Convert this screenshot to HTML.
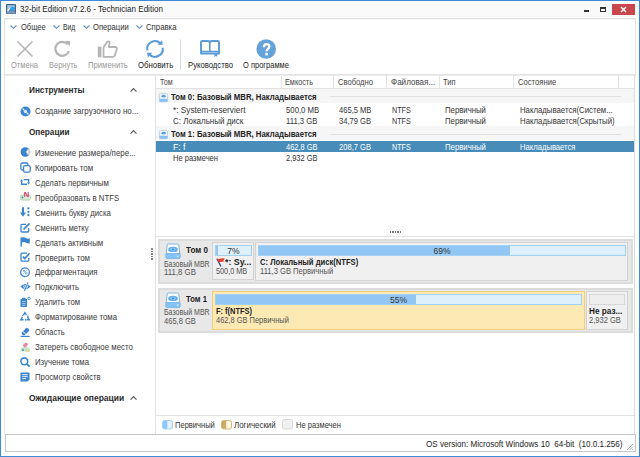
<!DOCTYPE html><html><head><meta charset="utf-8"><style>
*{margin:0;padding:0;box-sizing:border-box}
html,body{width:640px;height:457px;overflow:hidden;background:#fff}
body{position:relative;font-family:"Liberation Sans",sans-serif;font-size:8px;color:#333}
.t{position:absolute;white-space:nowrap;line-height:10px;transform-origin:0 0}
svg{position:absolute;overflow:visible}
</style></head><body>
<div style="position:absolute;left:0px;top:0px;width:640px;height:457px;border:1px solid #3d8bd9"></div>
<div style="position:absolute;left:1px;top:1px;width:638px;height:17px;background:#fafafa"></div>
<svg style="left:6px;top:4px" width="10" height="10" viewBox="0 0 10 10"><rect x="0" y="0" width="10" height="10" rx="0.8" fill="#39648c"/><rect x="1.2" y="1.2" width="7.6" height="6.4" fill="#a9c6de"/><path d="M1.2 7.6 Q2.5 3.5 6 3.2 L8.8 3.2 L8.8 7.6 Z" fill="#5d8db8"/><path d="M1.6 7.4 Q2.6 4.2 5 3.8" stroke="#fff" stroke-width="1.2" fill="none"/><circle cx="6.2" cy="4.4" r="1.9" fill="#1fa6ee"/><rect x="0.6" y="8.2" width="8.8" height="1.4" fill="#8aa5bd"/></svg>
<div class="t" style="left:19.50px;top:4px;font-size:9px;color:#1a1a1a;transform:scaleX(0.8933);">32-bit Edition v7.2.6 - Technician Edition</div>
<div style="position:absolute;left:584px;top:10px;width:5px;height:2px;background:#333"></div>
<div style="position:absolute;left:600px;top:7px;width:6px;height:5px;border:1px solid #333;border-top-width:2px"></div>
<div style="position:absolute;left:612px;top:4px;width:23px;height:11px;background:#c9474c"></div>
<svg style="left:620px;top:6px" width="7" height="7" viewBox="0 0 7 7"><path d="M1 1L6 6M6 1L1 6" stroke="#fff" stroke-width="1.4"/></svg>
<div style="position:absolute;left:4px;top:18px;width:632px;height:57px;border:1px solid #e2e2e2;border-bottom:none"></div>
<div style="position:absolute;left:5px;top:19px;width:630px;height:1px;background:#f3f3f3"></div>
<svg style="left:10px;top:25px" width="7" height="4" viewBox="0 0 7 4"><path d="M0.5 0.5L3.5 3.3L6.5 0.5" stroke="#5e8cba" stroke-width="1.1" fill="none"/></svg>
<div class="t" style="left:21.10px;top:22px;font-size:9px;color:#333;transform:scaleX(0.8383);">Общее</div>
<svg style="left:52.5px;top:25px" width="7" height="4" viewBox="0 0 7 4"><path d="M0.5 0.5L3.5 3.3L6.5 0.5" stroke="#5e8cba" stroke-width="1.1" fill="none"/></svg>
<div class="t" style="left:63.00px;top:22px;font-size:9px;color:#333;transform:scaleX(0.7487);">Вид</div>
<svg style="left:82.5px;top:25px" width="7" height="4" viewBox="0 0 7 4"><path d="M0.5 0.5L3.5 3.3L6.5 0.5" stroke="#5e8cba" stroke-width="1.1" fill="none"/></svg>
<div class="t" style="left:93.00px;top:22px;font-size:9px;color:#333;transform:scaleX(0.8497);">Операции</div>
<svg style="left:135.75px;top:25px" width="7" height="4" viewBox="0 0 7 4"><path d="M0.5 0.5L3.5 3.3L6.5 0.5" stroke="#5e8cba" stroke-width="1.1" fill="none"/></svg>
<div class="t" style="left:145.75px;top:22px;font-size:9px;color:#333;transform:scaleX(0.8640);">Справка</div>
<svg style="left:17px;top:41px" width="16" height="16" viewBox="0 0 16 16"><path d="M0.5 0.5L15.5 15.5M15.5 0.5L0.5 15.5" stroke="#b4b4b4" stroke-width="1.5"/></svg>
<div class="t" style="left:11.25px;top:60px;font-size:9px;color:#999;transform:scaleX(0.8363);">Отмена</div>
<svg style="left:54px;top:40px" width="17" height="17" viewBox="0 0 17 17"><path d="M13.6 4.2 A7 7 0 1 0 15 11" stroke="#b4b4b4" stroke-width="2.2" fill="none"/><path d="M11.2 0.8 L16.2 1.2 L15.6 6.4 Z" fill="#b4b4b4"/></svg>
<div class="t" style="left:48.75px;top:60px;font-size:9px;color:#999;transform:scaleX(0.8308);">Вернуть</div>
<svg style="left:97px;top:40px" width="21" height="18" viewBox="0 0 21 18"><rect x="0.8" y="6.7" width="3.6" height="10.6" fill="#b4b4b4"/><path d="M6.5 7.5 L10.2 1.8 Q12.2 0.6 12.6 2.6 L11.8 7 L18.4 7 Q20.2 7.3 19.8 9.2 L17.8 15.6 Q17.4 16.8 16 16.8 L6.5 16.8 Z" fill="#fff" stroke="#b4b4b4" stroke-width="1.8" stroke-linejoin="round"/></svg>
<div class="t" style="left:87.50px;top:60px;font-size:9px;color:#999;transform:scaleX(0.8544);">Применить</div>
<svg style="left:145px;top:40px" width="20" height="18" viewBox="0 0 20 18"><path d="M2.3 10.35 A7.8 7.8 0 0 1 15.97 3.99" stroke="#5a9ad8" stroke-width="2.1" fill="none"/><path d="M17.1 0.3 L17.7 4.8 L12.5 4.8 Z" fill="#5a9ad8"/><path d="M17.68 7.65 A7.8 7.8 0 0 1 4.03 14.01" stroke="#5a9ad8" stroke-width="2.1" fill="none"/><path d="M2 12.8 L7.2 12.8 L3 17.6 Z" fill="#5a9ad8"/></svg>
<div class="t" style="left:137.50px;top:60px;font-size:9px;color:#222;transform:scaleX(0.8646);">Обновить</div>
<div style="position:absolute;left:180px;top:39px;width:1px;height:31px;background:#dedede"></div>
<svg style="left:200px;top:40px" width="21" height="18" viewBox="0 0 21 18"><path d="M1 13.6 L1 2.4 Q1 1 2.4 1 L7.6 1 Q9.6 1 9.8 2.6 Q10 1 12 1 L17.6 1 Q19 1 19 2.4 L19 13.6 Z" stroke="#5a9ad8" stroke-width="1.9" fill="none" stroke-linejoin="round"/><path d="M1.5 11.6 L18.5 11.6 M9.8 2.2 L9.8 11.6" stroke="#5a9ad8" stroke-width="1.6"/><path d="M14.4 13 L17.2 13 L17.2 17 L15.8 15.7 L14.4 17 Z" fill="#5a9ad8"/></svg>
<div class="t" style="left:187.50px;top:60px;font-size:9px;color:#222;transform:scaleX(0.8557);">Руководство</div>
<svg style="left:256px;top:39px" width="20" height="20" viewBox="0 0 20 20"><circle cx="10.2" cy="10" r="9.8" fill="#65a2da"/><path d="M7.9 8.2 Q7.9 5.1 10.6 5.1 Q13.3 5.1 13.3 7.6 Q13.3 9.2 11.8 10 Q10.6 10.6 10.6 12.3" stroke="#fff" stroke-width="2.3" fill="none"/><rect x="9.3" y="13.8" width="2.6" height="2.6" fill="#fff"/></svg>
<div class="t" style="left:243.30px;top:60px;font-size:9px;color:#222;transform:scaleX(0.8337);">О программе</div>
<div style="position:absolute;left:4px;top:74px;width:632px;height:1px;background:#e3e3e3"></div>
<div style="position:absolute;left:4px;top:75px;width:632px;height:1px;background:#ececec"></div>
<div style="position:absolute;left:4px;top:75px;width:1px;height:359px;background:#e6e6e6"></div>
<div class="t" style="left:28.75px;top:85px;font-size:9px;color:#2a2a2a;transform:scaleX(0.9126);font-weight:bold;">Инструменты</div>
<svg style="left:130px;top:88px" width="7" height="4" viewBox="0 0 7 4"><path d="M0.5 3.6L3.5 0.6L6.5 3.6" stroke="#555" stroke-width="1.1" fill="none"/></svg>
<svg style="left:20px;top:106px" width="11" height="11" viewBox="0 0 11 11"><circle cx="5.5" cy="5.5" r="5" fill="#3a86d2"/><circle cx="5.5" cy="5.5" r="1.7" fill="#dbe9f7"/><path d="M2.6 2.6 L4.2 4.2 M8.4 8.4 L6.8 6.8" stroke="#fff" stroke-width="1.3"/></svg>
<div class="t" style="left:35.00px;top:106px;font-size:9px;color:#3a3a3a;transform:scaleX(0.8881);">Создание загрузочного но...</div>
<div class="t" style="left:28.75px;top:127px;font-size:9px;color:#2a2a2a;transform:scaleX(0.9089);font-weight:bold;">Операции</div>
<svg style="left:130px;top:129.5px" width="7" height="4" viewBox="0 0 7 4"><path d="M0.5 3.6L3.5 0.6L6.5 3.6" stroke="#555" stroke-width="1.1" fill="none"/></svg>
<div class="t" style="left:35.00px;top:148px;font-size:9px;color:#3a3a3a;transform:scaleX(0.8806);">Изменение размера/пере...</div>
<svg style="left:20px;top:147px" width="10" height="10" viewBox="0 0 10 10"><circle cx="5.4" cy="5" r="4.8" fill="#3a84cf"/><path d="M5.6 5 L8.2 0.9 A4.8 4.8 0 0 1 8.2 9.1 Z" fill="#c9d0d8"/><path d="M5.6 5 L8.2 0.9 A4.8 4.8 0 0 0 5.6 5 A4.8 4.8 0 0 0 8.2 9.1 Z" fill="#3a84cf"/><path d="M7 5 L9.6 3 M7 5 L9.6 7" stroke="#fff" stroke-width="0.8"/></svg>
<div class="t" style="left:35.00px;top:163px;font-size:9px;color:#3a3a3a;transform:scaleX(0.8790);">Копировать том</div>
<svg style="left:20px;top:162px" width="10" height="10" viewBox="0 0 10 10"><rect x="0.9" y="1" width="7" height="7" rx="1.5" fill="none" stroke="#3a84cf" stroke-width="1.3"/><rect x="3.6" y="3.6" width="6.6" height="6.6" rx="1.5" fill="#fff" stroke="#3a84cf" stroke-width="1.3"/></svg>
<div class="t" style="left:35.00px;top:178px;font-size:9px;color:#3a3a3a;transform:scaleX(0.8707);">Сделать первичным</div>
<svg style="left:20px;top:178px" width="10" height="10" viewBox="0 0 10 10"><path d="M1.6 3.2 V6.2 H7" stroke="#3a84cf" stroke-width="1.4" fill="none"/><path d="M0 3.4 L3.2 3.4 L1.6 1.2 Z" fill="#3a84cf"/><path d="M8.6 4.6 V1.6 H3.6" stroke="#3a84cf" stroke-width="1.4" fill="none"/><path d="M7 4.4 L10.2 4.4 L8.6 6.6 Z" fill="#3a84cf"/></svg>
<div class="t" style="left:35.00px;top:193px;font-size:9px;color:#3a3a3a;transform:scaleX(0.8666);">Преобразовать в NTFS</div>
<svg style="left:20px;top:190px" width="10" height="10" viewBox="0 0 10 10"><rect x="0.5" y="5" width="10" height="5" rx="1.5" fill="#d8ecd0" stroke="#b8d4b0"/><text x="6.5" y="7" text-anchor="middle" font-family="Liberation Sans" font-weight="bold" font-size="7.5" fill="#d0306a">N</text><circle cx="2.5" cy="7.5" r="0.9" fill="#3a84cf"/></svg>
<div class="t" style="left:35.00px;top:208px;font-size:9px;color:#3a3a3a;transform:scaleX(0.8624);">Сменить букву диска</div>
<svg style="left:20px;top:207px" width="10" height="10" viewBox="0 0 10 10"><path d="M3 0.2 L3 7.5" stroke="#3a84cf" stroke-width="2"/><path d="M0 5.6 L3 9.8 L6 5.6 Z" fill="#3a84cf"/><circle cx="8.4" cy="1.4" r="1.1" fill="#3a84cf"/><circle cx="8.4" cy="4.8" r="1.1" fill="#3a84cf"/><circle cx="8.4" cy="8.2" r="1.1" fill="#3a84cf"/></svg>
<div class="t" style="left:35.00px;top:223px;font-size:9px;color:#3a3a3a;transform:scaleX(0.8564);">Сменить метку</div>
<svg style="left:20px;top:223px" width="10" height="10" viewBox="0 0 10 10"><path d="M6 1.3 L2 1.3 Q1 1.3 1 2.3 L1 8.2 Q1 9 2 9 L7.8 9 Q8.7 9 8.7 8 L8.7 5" stroke="#3a84cf" stroke-width="1.3" fill="none"/><path d="M3.6 6.4 L9.6 0.4" stroke="#3a84cf" stroke-width="1.7"/></svg>
<div class="t" style="left:35.00px;top:238px;font-size:9px;color:#3a3a3a;transform:scaleX(0.8691);">Сделать активным</div>
<svg style="left:20px;top:237px" width="10" height="10" viewBox="0 0 10 10"><path d="M1.2 0.5 L1.2 9.6" stroke="#3a84cf" stroke-width="1.5"/><path d="M1.5 0.6 Q4.5 -0.2 6 1.1 Q7.8 2.2 9.8 1.3 L9.8 6.2 Q7.8 7 6 5.7 Q4.5 4.5 1.5 5.6 Z" fill="#3a84cf"/></svg>
<div class="t" style="left:35.00px;top:253px;font-size:9px;color:#3a3a3a;transform:scaleX(0.8763);">Проверить том</div>
<svg style="left:20px;top:252px" width="10" height="10" viewBox="0 0 10 10"><path d="M7 1.2 L2 1.2 Q1 1.2 1 2.2 L1 8.2 Q1 9.1 2 9.1 L7.9 9.1 Q8.8 9.1 8.8 8 L8.8 6" stroke="#3a84cf" stroke-width="1.3" fill="none"/><path d="M2.8 4.6 L4.8 6.6 L9.6 1.2" stroke="#3a84cf" stroke-width="1.7" fill="none"/></svg>
<div class="t" style="left:35.00px;top:267px;font-size:9px;color:#3a3a3a;transform:scaleX(0.8688);">Дефрагментация</div>
<svg style="left:20px;top:267px" width="10" height="10" viewBox="0 0 10 10"><circle cx="5" cy="5.2" r="4.4" fill="none" stroke="#3a84cf" stroke-width="1.3"/><circle cx="4" cy="4.2" r="1.1" fill="#8ab8e4"/><circle cx="6.3" cy="6.3" r="1.2" fill="#8ab8e4"/><path d="M3.4 6.8 L6.8 3.4" stroke="#8ab8e4" stroke-width="0.9"/></svg>
<div class="t" style="left:35.00px;top:282px;font-size:9px;color:#3a3a3a;transform:scaleX(0.8651);">Подключить</div>
<svg style="left:20px;top:282px" width="10" height="10" viewBox="0 0 10 10"><path d="M0.3 4.6 Q5.5 -0.6 10.7 4.6 Q5.5 9.8 0.3 4.6 Z" fill="#3a84cf"/><ellipse cx="5.5" cy="4.6" rx="2.6" ry="1.3" fill="#c4dcf2"/><circle cx="5.4" cy="4.6" r="1" fill="#3a84cf"/><path d="M8 0.4 L4.4 8.8" stroke="#fff" stroke-width="2"/><path d="M8 0.4 L4.4 8.8" stroke="#3a84cf" stroke-width="1.1"/></svg>
<div class="t" style="left:35.00px;top:297px;font-size:9px;color:#3a3a3a;transform:scaleX(0.8653);">Удалить том</div>
<svg style="left:20px;top:297px" width="10" height="10" viewBox="0 0 10 10"><rect x="0.5" y="2" width="6.5" height="8" fill="#3a84cf"/><rect x="2" y="0.8" width="3.5" height="1.5" fill="#3a84cf"/><path d="M2 4.5 H5.5 M2 6.5 H5.5 M2 8.3 H5.5" stroke="#cfe2f5" stroke-width="0.7"/><circle cx="9" cy="1.4" r="1.2" fill="none" stroke="#3a84cf" stroke-width="0.9"/></svg>
<div class="t" style="left:35.00px;top:312px;font-size:9px;color:#3a3a3a;transform:scaleX(0.8696);">Форматирование тома</div>
<svg style="left:20px;top:312px" width="10" height="10" viewBox="0 0 10 10"><path d="M3.4 3.2 L5 0.6 L6.4 3" stroke="#3a84cf" stroke-width="1.4" fill="none"/><path d="M7.4 4.6 L9.2 7.8 L6.6 7.8" stroke="#3a84cf" stroke-width="1.4" fill="none"/><path d="M3.6 7.8 L0.8 7.8 L2.4 5" stroke="#3a84cf" stroke-width="1.4" fill="none"/><path d="M6.2 6.4 L4.6 7.8 L6.2 9.2 Z M1.4 4.4 L3.4 4 L3.2 2.2 Z M8.6 3.8 L6.6 3.2 L8 5.6 Z" fill="#3a84cf"/></svg>
<div class="t" style="left:35.00px;top:327px;font-size:9px;color:#3a3a3a;transform:scaleX(0.8392);">Область</div>
<svg style="left:20px;top:327px" width="10" height="10" viewBox="0 0 10 10"><path d="M1.4 6 L6 1.2 Q6.8 0.5 7.6 1.2 L9 2.6 Q9.6 3.3 9 4 L4.6 8.2 L2.8 8.2 Z" fill="#3a84cf"/><path d="M3 4.6 L5.6 7" stroke="#fff" stroke-width="0.9"/><path d="M0.6 9.4 L9.6 9.4" stroke="#3a84cf" stroke-width="1.2"/></svg>
<div class="t" style="left:35.00px;top:342px;font-size:9px;color:#3a3a3a;transform:scaleX(0.8750);">Затереть свободное место</div>
<svg style="left:20px;top:342px" width="10" height="10" viewBox="0 0 10 10"><path d="M0.5 7 L5 3 L10 7 L10 9.5 L0.5 9.5 Z" fill="#cfe3c2"/><path d="M2.5 3.5 L5 1 Q6 0.3 7 1 L8.2 2.2 L5.2 5.5 Z" fill="#e58a9e"/><circle cx="3" cy="8" r="0.9" fill="#3a84cf"/><path d="M6 9 L9.5 9" stroke="#e0c060" stroke-width="0.8"/></svg>
<div class="t" style="left:35.00px;top:357px;font-size:9px;color:#3a3a3a;transform:scaleX(0.8653);">Изучение тома</div>
<svg style="left:20px;top:357px" width="10" height="10" viewBox="0 0 10 10"><circle cx="4.3" cy="4.3" r="3.4" fill="none" stroke="#3a84cf" stroke-width="1.6"/><path d="M6.8 6.8 L9.6 9.6" stroke="#3a84cf" stroke-width="1.9"/></svg>
<div class="t" style="left:35.00px;top:372px;font-size:9px;color:#3a3a3a;transform:scaleX(0.8621);">Просмотр свойств</div>
<svg style="left:20px;top:372px" width="10" height="10" viewBox="0 0 10 10"><path d="M0.5 0.5 L9.5 0.5 L9.5 7.5 L7.5 9.6 L0.5 9.6 Z" fill="#3a84cf"/><path d="M2.2 2.7 H7.8 M2.2 4.7 H7.8 M2.2 6.7 H6" stroke="#fff" stroke-width="0.9"/></svg>
<div class="t" style="left:28.60px;top:393px;font-size:9px;color:#2a2a2a;transform:scaleX(0.9427);font-weight:bold;">Ожидающие операции</div>
<svg style="left:130px;top:395.5px" width="7" height="4" viewBox="0 0 7 4"><path d="M0.5 3.6L3.5 0.6L6.5 3.6" stroke="#555" stroke-width="1.1" fill="none"/></svg>
<div style="position:absolute;left:155px;top:75px;width:1px;height:359px;background:#e2e2e2"></div>
<div style="position:absolute;left:634px;top:75px;width:1px;height:359px;background:#dadada"></div>
<div style="position:absolute;left:156px;top:88px;width:478px;height:1px;background:#e2e2e2"></div>
<div style="position:absolute;left:281px;top:75px;width:1px;height:13px;background:#e2e2e2"></div>
<div style="position:absolute;left:333px;top:75px;width:1px;height:13px;background:#e2e2e2"></div>
<div style="position:absolute;left:386px;top:75px;width:1px;height:13px;background:#e2e2e2"></div>
<div style="position:absolute;left:439px;top:75px;width:1px;height:13px;background:#e2e2e2"></div>
<div style="position:absolute;left:513px;top:75px;width:1px;height:13px;background:#e2e2e2"></div>
<div style="position:absolute;left:618px;top:75px;width:1px;height:13px;background:#e2e2e2"></div>
<div class="t" style="left:160.20px;top:77px;font-size:9px;color:#444;transform:scaleX(0.7911);">Том</div>
<div class="t" style="left:285.00px;top:77px;font-size:9px;color:#444;transform:scaleX(0.8105);">Емкость</div>
<div class="t" style="left:338.00px;top:77px;font-size:9px;color:#444;transform:scaleX(0.8460);">Свободно</div>
<div class="t" style="left:390.50px;top:77px;font-size:9px;color:#444;transform:scaleX(0.8966);">Файловая...</div>
<div class="t" style="left:443.00px;top:77px;font-size:9px;color:#444;transform:scaleX(0.8328);">Тип</div>
<div class="t" style="left:518.40px;top:77px;font-size:9px;color:#444;transform:scaleX(0.8507);">Состояние</div>
<div style="position:absolute;left:156px;top:89px;width:478px;height:14px;background:#f6f6f6"></div>
<svg style="left:159px;top:93px" width="9" height="9" viewBox="0 0 9 9"><rect x="0.4" y="0.4" width="8.2" height="8.4" rx="1.2" fill="#f4f8fc" stroke="#b9cde0" stroke-width="0.8"/><ellipse cx="4.6" cy="3.2" rx="2.2" ry="1.4" fill="#5aa2e4"/><rect x="0.4" y="5.8" width="8.2" height="3" rx="0.8" fill="#86c2f2"/></svg>
<div class="t" style="left:170.70px;top:92px;font-size:9px;color:#222;transform:scaleX(0.8654);font-weight:bold;">Том 0: Базовый MBR, Накладывается</div>
<div style="position:absolute;left:330px;top:96px;width:291px;height:1px;background:#e0e0e0"></div>
<div class="t" style="left:172.70px;top:105px;font-size:9px;color:#333;transform:scaleX(0.9168);">*: System-reserviert</div>
<div class="t" style="left:285.60px;top:105px;font-size:9px;color:#333;transform:scaleX(0.8619);">500,0 MB</div>
<div class="t" style="left:339.00px;top:105px;font-size:9px;color:#333;transform:scaleX(0.8411);">465,5 MB</div>
<div class="t" style="left:392.00px;top:105px;font-size:9px;color:#333;transform:scaleX(0.8002);">NTFS</div>
<div class="t" style="left:444.70px;top:105px;font-size:9px;color:#333;transform:scaleX(0.8626);">Первичный</div>
<div class="t" style="left:519.70px;top:105px;font-size:9px;color:#333;transform:scaleX(0.8654);">Накладывается(Систем...</div>
<div class="t" style="left:172.70px;top:116px;font-size:9px;color:#333;transform:scaleX(0.8872);">C: Локальный диск</div>
<div class="t" style="left:285.60px;top:116px;font-size:9px;color:#333;transform:scaleX(0.8559);">111,3 GB</div>
<div class="t" style="left:339.00px;top:116px;font-size:9px;color:#333;transform:scaleX(0.8416);">34,79 GB</div>
<div class="t" style="left:392.00px;top:116px;font-size:9px;color:#333;transform:scaleX(0.8002);">NTFS</div>
<div class="t" style="left:444.70px;top:116px;font-size:9px;color:#333;transform:scaleX(0.8626);">Первичный</div>
<div class="t" style="left:519.70px;top:116px;font-size:9px;color:#333;transform:scaleX(0.8701);">Накладывается(Скрытый)</div>
<div style="position:absolute;left:156px;top:126px;width:478px;height:14px;background:#f6f6f6"></div>
<svg style="left:159px;top:130px" width="9" height="9" viewBox="0 0 9 9"><rect x="0.4" y="0.4" width="8.2" height="8.4" rx="1.2" fill="#f4f8fc" stroke="#b9cde0" stroke-width="0.8"/><ellipse cx="4.6" cy="3.2" rx="2.2" ry="1.4" fill="#5aa2e4"/><rect x="0.4" y="5.8" width="8.2" height="3" rx="0.8" fill="#86c2f2"/></svg>
<div class="t" style="left:170.70px;top:129px;font-size:9px;color:#222;transform:scaleX(0.8654);font-weight:bold;">Том 1: Базовый MBR, Накладывается</div>
<div style="position:absolute;left:330px;top:134px;width:291px;height:1px;background:#e0e0e0"></div>
<div style="position:absolute;left:156px;top:141px;width:478px;height:11px;background:#488cb9"></div>
<div class="t" style="left:172.90px;top:142px;font-size:9px;color:#fff;transform:scaleX(0.9631);">F: f</div>
<div class="t" style="left:285.60px;top:142px;font-size:9px;color:#fff;transform:scaleX(0.8258);">462,8 GB</div>
<div class="t" style="left:339.00px;top:142px;font-size:9px;color:#fff;transform:scaleX(0.8416);">208,7 GB</div>
<div class="t" style="left:392.00px;top:142px;font-size:9px;color:#fff;transform:scaleX(0.8002);">NTFS</div>
<div class="t" style="left:444.70px;top:142px;font-size:9px;color:#fff;transform:scaleX(0.8626);">Первичный</div>
<div class="t" style="left:519.70px;top:142px;font-size:9px;color:#fff;transform:scaleX(0.8497);">Накладывается</div>
<div class="t" style="left:172.70px;top:153px;font-size:9px;color:#333;transform:scaleX(0.8391);">Не размечен</div>
<div class="t" style="left:285.60px;top:153px;font-size:9px;color:#333;transform:scaleX(0.8258);">2,932 GB</div>
<div style="position:absolute;left:389.5px;top:231px;width:1.5px;height:2px;background:#777"></div>
<div style="position:absolute;left:392.1px;top:231px;width:1.5px;height:2px;background:#777"></div>
<div style="position:absolute;left:394.7px;top:231px;width:1.5px;height:2px;background:#777"></div>
<div style="position:absolute;left:397.3px;top:231px;width:1.5px;height:2px;background:#777"></div>
<div style="position:absolute;left:399.9px;top:231px;width:1.5px;height:2px;background:#777"></div>
<div style="position:absolute;left:156px;top:236px;width:478px;height:1px;background:#e2e2e2"></div>
<div style="position:absolute;left:151px;top:248.0px;width:2px;height:1.5px;background:#888"></div>
<div style="position:absolute;left:151px;top:250.6px;width:2px;height:1.5px;background:#888"></div>
<div style="position:absolute;left:151px;top:253.2px;width:2px;height:1.5px;background:#888"></div>
<div style="position:absolute;left:151px;top:255.8px;width:2px;height:1.5px;background:#888"></div>
<div style="position:absolute;left:151px;top:258.4px;width:2px;height:1.5px;background:#888"></div>
<div style="position:absolute;left:158px;top:239px;width:475px;height:45px;background:#e8e8e8;border:2px solid #dcdcdc"></div>
<svg style="left:165px;top:243px" width="16" height="16" viewBox="0 0 16 16"><path d="M3.2 1 L12.8 1 Q13.6 1 13.8 2 L14.9 11 L1.1 11 L2.2 2 Q2.4 1 3.2 1 Z" fill="#fbfdff" stroke="#84b4de" stroke-width="1"/><rect x="0.8" y="10.6" width="14.4" height="4.9" rx="0.9" fill="#84c2f3" stroke="#6cb0ea" stroke-width="0.7"/><ellipse cx="8" cy="6.4" rx="4.8" ry="2.7" fill="#66ace9"/><ellipse cx="8" cy="6.4" rx="2.8" ry="1.4" fill="#8cc6f3"/><ellipse cx="8" cy="6.4" rx="1" ry="0.55" fill="#2d7cc6"/><rect x="11.8" y="12.6" width="1.8" height="1.1" fill="#e8f4fd"/></svg>
<div class="t" style="left:185.50px;top:245px;font-size:9px;color:#222;transform:scaleX(0.8951);font-weight:bold;">Том 0</div>
<div class="t" style="left:163.60px;top:259px;font-size:9px;color:#555;transform:scaleX(0.7781);">Базовый MBR</div>
<div class="t" style="left:163.60px;top:267px;font-size:9px;color:#555;transform:scaleX(0.8695);">111,8 GB</div>
<div style="position:absolute;left:212px;top:242px;width:42px;height:38px;background:#f0f0f0;border:1px solid #d3d3d3"></div>
<div style="position:absolute;left:215px;top:245px;width:37px;height:11px;background:#dff0fd;border:1px solid #a3d0f5"></div>
<div style="position:absolute;left:216px;top:246px;width:2px;height:9px;background:#92c7f3"></div>
<div class="t" style="left:215px;top:246px;width:37px;text-align:center;line-height:11px;font-size:8.5px;color:#333">7%</div>
<svg style="left:216px;top:258px" width="10" height="9" viewBox="0 0 10 9"><path d="M0.8 0.8 L5 8.5" stroke="#2c4f8c" stroke-width="1.3"/><path d="M0.8 0.6 Q3 1.2 5 0.6 Q7 0 9 0.4 L7.4 2.2 L8.4 3.6 Q6 3.4 4.4 4 Q3.2 4.4 2.6 4 Z" fill="#e8402e"/></svg>
<div class="t" style="left:225.20px;top:257px;font-size:9px;color:#222;transform:scaleX(0.9832);font-weight:bold;">*: Sy...</div>
<div class="t" style="left:215.80px;top:266px;font-size:9px;color:#555;transform:scaleX(0.8100);">500,0 MB</div>
<div style="position:absolute;left:255px;top:242px;width:373px;height:39px;background:#f0f0f0;border:1px solid #d3d3d3"></div>
<div style="position:absolute;left:258px;top:245px;width:368px;height:11px;background:#dff0fd;border:1px solid #a3d0f5"></div>
<div style="position:absolute;left:259px;top:246px;width:251px;height:9px;background:#92c7f3"></div>
<div class="t" style="left:258px;top:246px;width:368px;text-align:center;line-height:11px;font-size:8.5px;color:#333">69%</div>
<div class="t" style="left:259.60px;top:257px;font-size:9px;color:#222;transform:scaleX(0.8467);font-weight:bold;">C: Локальный диск(NTFS)</div>
<div class="t" style="left:259.60px;top:266px;font-size:9px;color:#555;transform:scaleX(0.8452);">111,3 GB Первичный</div>
<div style="position:absolute;left:158px;top:288px;width:475px;height:45px;background:#e8e8e8;border:2px solid #dcdcdc"></div>
<svg style="left:165px;top:292px" width="16" height="16" viewBox="0 0 16 16"><path d="M3.2 1 L12.8 1 Q13.6 1 13.8 2 L14.9 11 L1.1 11 L2.2 2 Q2.4 1 3.2 1 Z" fill="#fbfdff" stroke="#84b4de" stroke-width="1"/><rect x="0.8" y="10.6" width="14.4" height="4.9" rx="0.9" fill="#84c2f3" stroke="#6cb0ea" stroke-width="0.7"/><ellipse cx="8" cy="6.4" rx="4.8" ry="2.7" fill="#66ace9"/><ellipse cx="8" cy="6.4" rx="2.8" ry="1.4" fill="#8cc6f3"/><ellipse cx="8" cy="6.4" rx="1" ry="0.55" fill="#2d7cc6"/><rect x="11.8" y="12.6" width="1.8" height="1.1" fill="#e8f4fd"/></svg>
<div class="t" style="left:185.50px;top:294px;font-size:9px;color:#222;transform:scaleX(0.8542);font-weight:bold;">Том 1</div>
<div class="t" style="left:163.60px;top:307px;font-size:9px;color:#555;transform:scaleX(0.7781);">Базовый MBR</div>
<div class="t" style="left:163.60px;top:316px;font-size:9px;color:#555;transform:scaleX(0.8390);">465,8 GB</div>
<div style="position:absolute;left:212px;top:291px;width:373px;height:39px;background:#fde9b4;border:1px solid #f2cd7c"></div>
<div style="position:absolute;left:215px;top:294px;width:367px;height:11px;background:#dff0fd;border:1px solid #a3d0f5"></div>
<div style="position:absolute;left:216px;top:295px;width:200px;height:9px;background:#92c7f3"></div>
<div class="t" style="left:215px;top:295px;width:367px;text-align:center;line-height:11px;font-size:8.5px;color:#333">55%</div>
<div class="t" style="left:215.80px;top:306px;font-size:9px;color:#222;transform:scaleX(0.8278);font-weight:bold;">F: f(NTFS)</div>
<div class="t" style="left:215.80px;top:315px;font-size:9px;color:#555;transform:scaleX(0.8278);">462,8 GB Первичный</div>
<div style="position:absolute;left:586px;top:291px;width:42px;height:39px;background:#f0f0f0;border:1px solid #d3d3d3"></div>
<div style="position:absolute;left:589px;top:294px;width:36px;height:11px;background:#eeeeee;border:1px solid #d8d8d8"></div>
<div class="t" style="left:588.90px;top:306px;font-size:9px;color:#222;transform:scaleX(0.9115);font-weight:bold;">Не раз...</div>
<div class="t" style="left:588.90px;top:315px;font-size:9px;color:#555;transform:scaleX(0.8363);">2,932 GB</div>
<div style="position:absolute;left:156px;top:415px;width:478px;height:1px;background:#e2e2e2"></div>
<svg style="left:162px;top:420px" width="11" height="10" viewBox="0 0 11 10"><rect x="0.5" y="0.5" width="10" height="8.5" rx="2" fill="#d6ebfc" stroke="#a8d0f2"/><rect x="1" y="1" width="4.2" height="7.5" fill="#8ec6f6"/><rect x="6.5" y="1.5" width="2" height="6.5" fill="#eef7fe"/></svg>
<svg style="left:221px;top:420px" width="11" height="10" viewBox="0 0 11 10"><rect x="0.5" y="0.5" width="10" height="8.5" rx="2" fill="#fdf3d6" stroke="#d2b878"/><rect x="1" y="1" width="4.2" height="7.5" fill="#c8aa62"/><rect x="6.5" y="1.5" width="2" height="6.5" fill="#fffaf0"/></svg>
<svg style="left:282px;top:419px" width="11" height="11" viewBox="0 0 11 11"><rect x="0.5" y="0.5" width="10" height="9.5" rx="2" fill="#f0f0f0" stroke="#d9d9d9"/></svg>
<div class="t" style="left:175.30px;top:420px;font-size:9px;color:#333;transform:scaleX(0.8394);">Первичный</div>
<div class="t" style="left:234.30px;top:420px;font-size:9px;color:#333;transform:scaleX(0.8801);">Логический</div>
<div class="t" style="left:296.00px;top:420px;font-size:9px;color:#333;transform:scaleX(0.8372);">Не размечен</div>
<div style="position:absolute;left:5px;top:434px;width:631px;height:18px;border:1px solid #c6c6c6;background:#fff"></div>
<div class="t" style="left:426.20px;top:439px;font-size:9px;color:#222;transform:scaleX(0.8989);">OS version: Microsoft Windows 10&nbsp; 64-bit&nbsp; (10.0.1.256)</div>
<svg style="left:626px;top:443px" width="8" height="8" viewBox="0 0 8 8"><path d="M7 1 L1 7 M7 3.5 L3.5 7 M7 6 L6 7" stroke="#aaa" stroke-width="0.9"/></svg>
</body></html>
